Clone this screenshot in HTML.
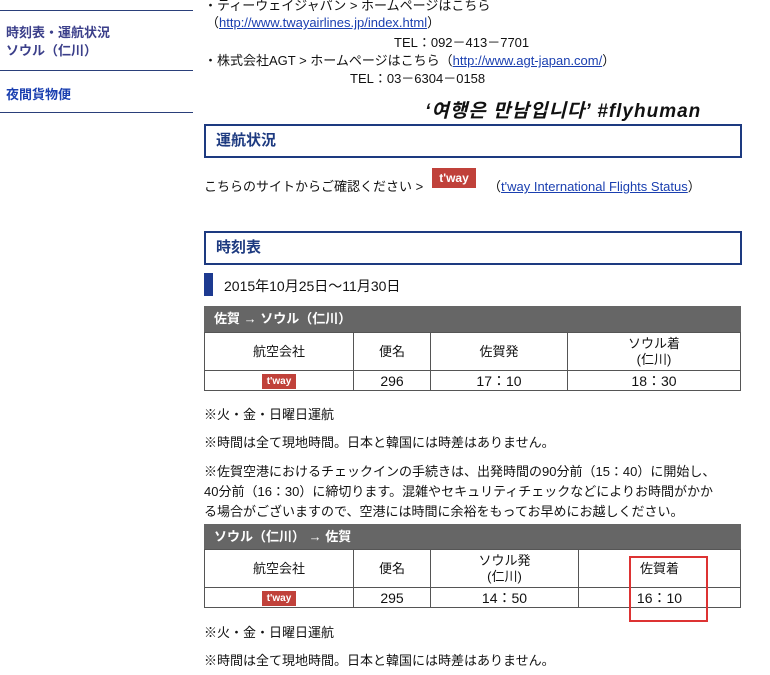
<!DOCTYPE html><html><head><meta charset="utf-8"><style>
body{margin:0;width:770px;height:675px;background:#fff;font-family:"Liberation Sans","Noto Sans CJK JP",sans-serif;font-size:13px;color:#111;position:relative;overflow:hidden}
.a{position:absolute;white-space:nowrap}
.hl{position:absolute;left:0;width:193px;height:1px;background:#2a3f7a}
a{color:#1a3fb0;text-decoration:underline}
.box{position:absolute;left:204px;width:538px;border:2px solid #1d3a80;height:34px;color:#1d3a80;font-weight:bold;font-size:15px;line-height:30px;padding-left:10px;box-sizing:border-box}
.bar{position:absolute;left:204px;width:537px;background:#666;color:#fff;font-weight:bold;line-height:25px;padding-left:10px;box-sizing:border-box}
table{position:absolute;left:204px;width:537px;border-collapse:collapse}
td{border:1px solid #555;text-align:center;font-size:13px;padding:0;line-height:16px}
.tw{display:inline-block;background:#c0413a;color:#fff;font-weight:bold;font-size:10px;width:34px;height:15px;line-height:15px}
</style></head><body>
<div class="hl" style="top:10px"></div><div class="hl" style="top:70px"></div><div class="hl" style="top:112px"></div>
<div class="a" style="left:6px;top:24px;color:#3b3f8a;font-weight:bold;line-height:18px">時刻表・運航状況<br>ソウル（仁川）</div>
<div class="a" style="left:6px;top:84px;color:#1a3fb0;font-weight:bold">夜間貨物便</div>
<div class="a" style="left:204px;top:-5px">・ティーウェイジャパン &gt; ホームページはこちら</div>
<div class="a" style="left:206px;top:12px">（<a>http://www.twayairlines.jp/index.html</a>）</div>
<div class="a" style="left:394px;top:32px">TEL：092－413－7701</div>
<div class="a" style="left:204px;top:50px">・株式会社AGT &gt; ホームページはこちら（<a>http://www.agt-japan.com/</a>）</div>
<div class="a" style="left:350px;top:68px">TEL：03－6304－0158</div>
<div class="a" style="left:425px;top:96px;font-size:19px;font-weight:bold;font-style:italic;letter-spacing:1px">‘여행은 만남입니다’ #flyhuman</div>
<div class="box" style="top:124px">運航状況</div>
<div class="a" style="left:204px;top:176px">こちらのサイトからご確認ください &gt;</div>
<div class="a tw" style="left:432px;top:168px;width:44px;height:20px;line-height:20px;text-align:center;font-size:12px">t'way</div>
<div class="a" style="left:488px;top:176px">（<a>t'way International Flights Status</a>）</div>
<div class="box" style="top:231px">時刻表</div>
<div class="a" style="left:204px;top:273px;width:9px;height:23px;background:#1d3a90"></div>
<div class="a" style="left:224px;top:276px;font-size:14px">2015年10月25日～11月30日</div>
<div class="bar" style="top:306px;height:26px">佐賀 → ソウル（仁川）</div>
<table style="top:332px"><tr style="height:38px"><td style="width:148px">航空会社</td><td style="width:76px">便名</td><td style="width:136px">佐賀発</td><td>ソウル着<br>(仁川)</td></tr>
<tr style="height:20px"><td><span class="tw">t'way</span></td><td style="font-size:14px">296</td><td style="font-size:14px">17：10</td><td style="font-size:14px">18：30</td></tr></table>
<div class="a" style="left:204px;top:404px">※火・金・日曜日運航</div>
<div class="a" style="left:204px;top:432px">※時間は全て現地時間。日本と韓国には時差はありません。</div>
<div class="a" style="left:204px;top:462px;line-height:20px">※佐賀空港におけるチェックインの手続きは、出発時間の90分前（15：40）に開始し、<br>40分前（16：30）に締切ります。混雑やセキュリティチェックなどによりお時間がかか<br>る場合がございますので、空港には時間に余裕をもってお早めにお越しください。</div>
<div class="bar" style="top:524px;height:25px">ソウル（仁川） → 佐賀</div>
<table style="top:549px"><tr style="height:38px"><td style="width:148px">航空会社</td><td style="width:76px">便名</td><td style="width:147px">ソウル発<br>(仁川)</td><td>佐賀着</td></tr>
<tr style="height:20px"><td><span class="tw">t'way</span></td><td style="font-size:14px">295</td><td style="font-size:14px">14：50</td><td style="font-size:14px">16：10</td></tr></table>
<div class="a" style="left:629px;top:556px;width:75px;height:62px;border:2px solid #d33"></div>
<div class="a" style="left:204px;top:622px">※火・金・日曜日運航</div>
<div class="a" style="left:204px;top:650px">※時間は全て現地時間。日本と韓国には時差はありません。</div>
</body></html>
